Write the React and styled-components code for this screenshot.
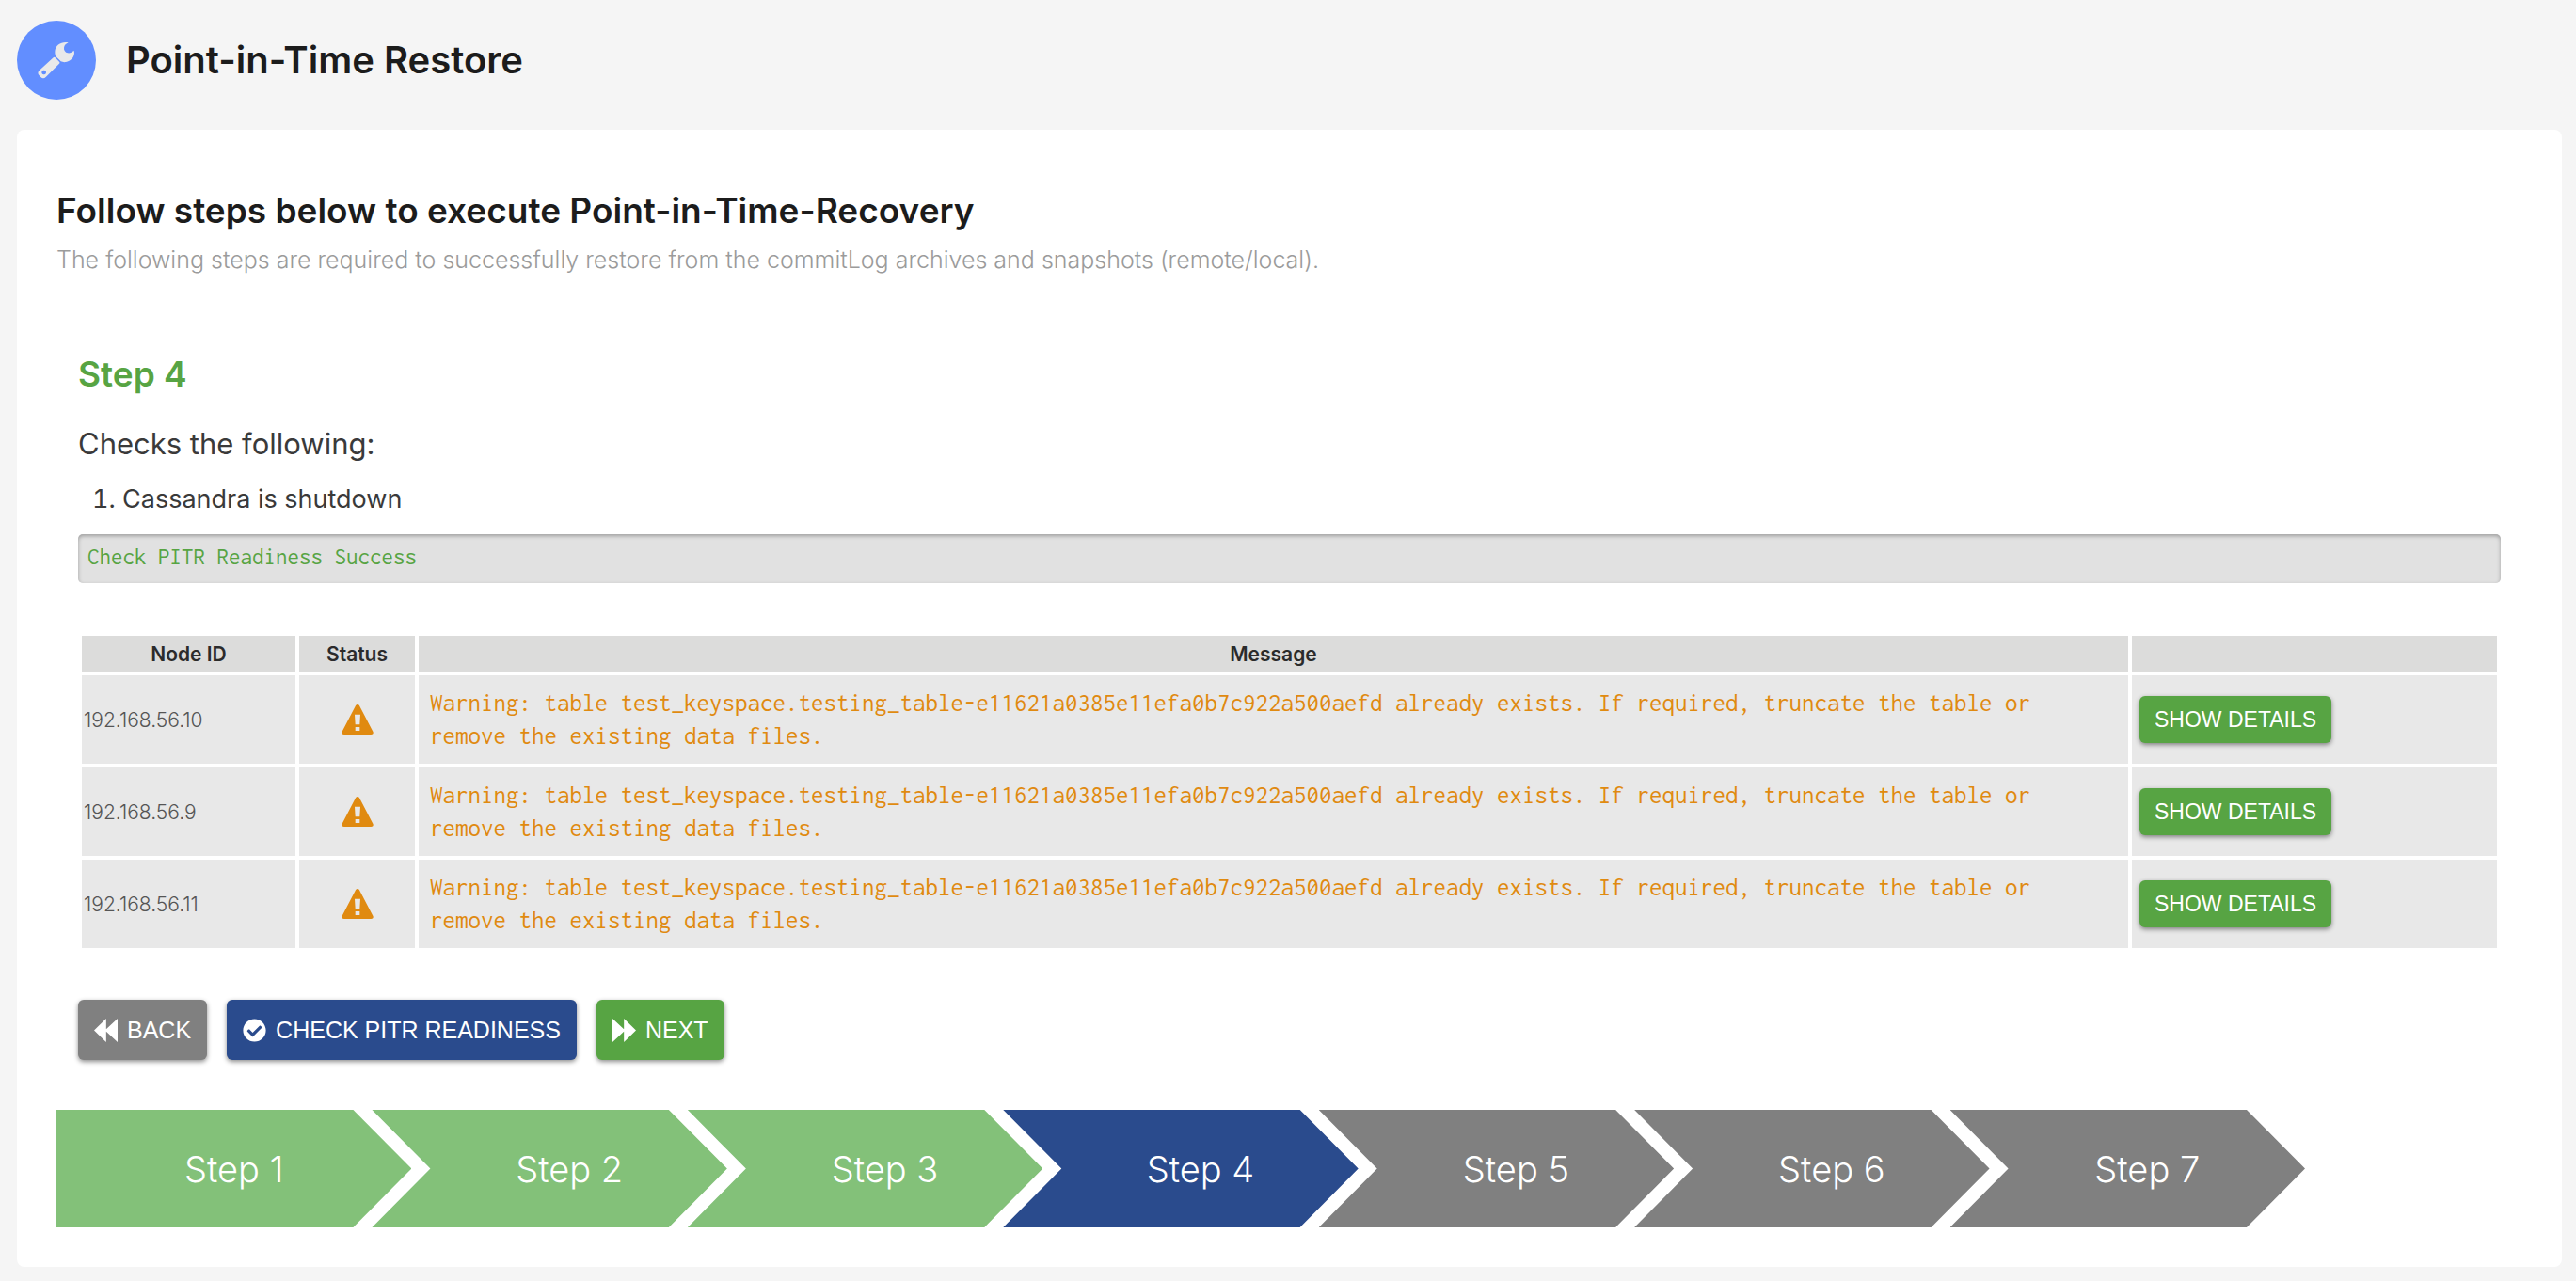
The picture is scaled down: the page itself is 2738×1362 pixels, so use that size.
import React from "react";
import styled, { createGlobalStyle } from "styled-components";
import { FaCheckCircle } from "react-icons/fa";

const sans = `Inter, "Liberation Sans", sans-serif`;
const mono = `Inconsolata, "Noto Sans Mono CJK SC", "Liberation Mono", monospace`;

const colors = {
  page: "#f5f5f5",
  panel: "#ffffff",
  ink: "#1c1c1c",
  text: "#3a3a3a",
  muted: "#9b9b9b",
  green: "#57a443",
  greenDone: "#83c179",
  blue: "#2a4b8d",
  gray: "#808080",
  warning: "#e08a10",
  badge: "#628eff",
};

const GlobalStyle = createGlobalStyle`
  *, *::before, *::after { box-sizing: border-box; }
  body {
    margin: 0;
    background: ${colors.page};
    color: ${colors.text};
    font-family: ${sans};
  }
`;

const Page = styled.div`
  padding: 22px 15px 15px 18px;
`;

const PageHeader = styled.header`
  display: flex;
  align-items: center;
  gap: 32px;
  margin-bottom: 32px;
`;

const Badge = styled.span`
  display: flex;
  align-items: center;
  justify-content: center;
  width: 84px;
  height: 84px;
  border-radius: 50%;
  background: ${colors.badge};
`;

const PageTitle = styled.h1`
  margin: 0;
  color: ${colors.ink};
  font-size: 40px;
  font-weight: 600;
  line-height: 48px;
`;

const Panel = styled.main`
  padding: 62px 42px 42px;
  border-radius: 8px;
  background: ${colors.panel};
`;

const PanelTitle = styled.h2`
  margin: 0 0 10px;
  color: ${colors.ink};
  font-size: 37px;
  font-weight: 600;
  line-height: 48px;
`;

const Lead = styled.p`
  margin: 0 0 80px;
  color: ${colors.muted};
  font-size: 25px;
  font-weight: 300;
  line-height: 36px;
`;

const StepBody = styled.section`
  margin-bottom: 53px;
  padding: 0 23px;
`;

const StepTitle = styled.h3`
  margin: 0 0 30px;
  color: ${colors.green};
  font-size: 37px;
  font-weight: 600;
  line-height: 48px;
`;

const Intro = styled.p`
  margin: 0 0 21px;
  font-size: 31px;
  font-weight: 400;
  line-height: 40px;
`;

const Checks = styled.ol`
  margin: 0 0 19px;
  padding-left: 47px;
  font-size: 27px;
  font-weight: 400;
  line-height: 36px;
`;

const Output = styled.pre`
  margin: 0 0 52px;
  padding: 8px 10px 12px;
  border-radius: 5px;
  background: #e1e1e1;
  box-shadow: inset 0 2px 4px rgba(0, 0, 0, 0.3);
  color: ${colors.green};
  font-family: ${mono};
  font-size: 25px;
  line-height: 32px;
`;

const NodeTable = styled.table`
  width: 100%;
  margin-bottom: 51px;
  border-spacing: 4px;
  table-layout: fixed;
`;

const HeadCell = styled.th`
  width: ${(p) => p.$width || "auto"};
  height: 38px;
  padding: 0;
  background: #dcdcdb;
  color: #2b2b2b;
  font-size: 21px;
  font-weight: 600;
`;

const Cell = styled.td`
  height: 94px;
  padding: 0 16px 0 ${(p) => p.$indent || "0"};
  background: #e8e8e8;
`;

const NodeCell = styled(Cell)`
  color: #555555;
  font-size: 21px;
  font-weight: 300;
`;

const StatusCell = styled(Cell)`
  padding: 0;

  svg {
    display: block;
    margin: 0 auto;
  }
`;

const MessageCell = styled(Cell)`
  color: ${colors.warning};
  font-family: ${mono};
  font-size: 27px;
  line-height: 35px;
`;

const Button = styled.button`
  display: inline-flex;
  align-items: center;
  gap: 10px;
  height: 64px;
  padding: 0 17px;
  border: 0;
  border-radius: 6px;
  background: ${(p) => p.$color};
  box-shadow: 0 2px 5px rgba(0, 0, 0, 0.45);
  color: #ffffff;
  font-family: "Liberation Sans", Arial, sans-serif;
  font-size: 25px;
  text-transform: uppercase;
  white-space: nowrap;
  cursor: pointer;
`;

const SmallButton = styled(Button)`
  display: flex;
  height: 50px;
  padding: 0 16px;
  font-size: 23px;
`;

const Actions = styled.div`
  display: flex;
  gap: 21px;
`;

const Steps = styled.ol`
  display: grid;
  grid-template-columns: repeat(7, 1fr);
  max-width: 2390px;
  margin: 0;
  padding: 0 0 0 42px;
  list-style: none;
`;

const stepColor = {
  done: colors.greenDone,
  current: colors.blue,
  pending: colors.gray,
};

const Step = styled.li`
  display: flex;
  align-items: center;
  justify-content: center;
  height: 125px;
  margin-left: -42px;
  padding-left: 42px;
  background: ${(p) => stepColor[p.$state]};
  clip-path: polygon(
    0 0,
    calc(100% - 62px) 0,
    100% 50%,
    calc(100% - 62px) 100%,
    0 100%,
    62px 50%
  );
  color: #ffffff;
  font-size: 38px;
  font-weight: 300;

  &:first-child {
    padding-left: 0;
    clip-path: polygon(
      0 0,
      calc(100% - 62px) 0,
      100% 50%,
      calc(100% - 62px) 100%,
      0 100%
    );
  }
`;

function WrenchIcon() {
  return (
    <svg width="42" height="42" viewBox="0 0 126 126" aria-hidden="true">
      <path
        fill="#e9e9ea"
        d="M101 7C82 2 59 13 58 36c0 7 1 11 3 15l16 16c5 2 10 3 16 2 15-2 27-15 27-30 0-3-1-5-2-7-5 6-12 9-19 8-8-2-13-9-12-17 1-8 7-13 14-16z"
      />
      <path
        fill="#e9e9ea"
        fillRule="evenodd"
        d="M53 55c2-2 4-2 6 0l13 13c2 2 2 4 0 6l-43 43c-5 5-11 5-16 0l-5-5c-5-5-5-11 0-16zM23 95a7 7 0 1 0 0.1 0z"
      />
    </svg>
  );
}

function WarningIcon() {
  return (
    <svg width="34" height="32" viewBox="0 0 102 96" role="img" aria-label="Warning">
      <path
        fill={colors.warning}
        fillRule="evenodd"
        d="M45 4c3-5 9-5 12 0l43 82c3 5 0 10-6 10H8c-6 0-9-5-6-10zM42 32l2 32h14l2-32zM44 72v12h14V72z"
      />
    </svg>
  );
}

function RewindIcon() {
  return (
    <svg width="25" height="25" viewBox="0 0 76 76" fill="currentColor" aria-hidden="true">
      <path d="M39 0v76L0 38zM76 0v76L35 38z" />
    </svg>
  );
}

function ForwardIcon() {
  return (
    <svg width="25" height="25" viewBox="0 0 76 76" fill="currentColor" aria-hidden="true">
      <path d="M37 0v76l39-38zM0 0v76l41-38z" />
    </svg>
  );
}

const nodes = ["192.168.56.10", "192.168.56.9", "192.168.56.11"];

const warning =
  "Warning: table test_keyspace.testing_table-e11621a0385e11efa0b7c922a500aefd already exists. If required, truncate the table or remove the existing data files.";

const steps = ["done", "done", "done", "current", "pending", "pending", "pending"];

export default function App() {
  return (
    <>
      <GlobalStyle />
      <Page>
        <PageHeader>
          <Badge>
            <WrenchIcon />
          </Badge>
          <PageTitle>Point-in-Time Restore</PageTitle>
        </PageHeader>
        <Panel>
          <PanelTitle>Follow steps below to execute Point-in-Time-Recovery</PanelTitle>
          <Lead>
            The following steps are required to successfully restore from the commitLog archives
            and snapshots (remote/local).
          </Lead>
          <StepBody>
            <StepTitle>Step 4</StepTitle>
            <Intro>Checks the following:</Intro>
            <Checks>
              <li>Cassandra is shutdown</li>
            </Checks>
            <Output>Check PITR Readiness Success</Output>
            <NodeTable>
              <thead>
                <tr>
                  <HeadCell $width="227px">Node ID</HeadCell>
                  <HeadCell $width="123px">Status</HeadCell>
                  <HeadCell>Message</HeadCell>
                  <HeadCell $width="388px" />
                </tr>
              </thead>
              <tbody>
                {nodes.map((node) => (
                  <tr key={node}>
                    <NodeCell $indent="2px">{node}</NodeCell>
                    <StatusCell>
                      <WarningIcon />
                    </StatusCell>
                    <MessageCell $indent="12px">{warning}</MessageCell>
                    <Cell $indent="8px">
                      <SmallButton type="button" $color={colors.green}>
                        Show details
                      </SmallButton>
                    </Cell>
                  </tr>
                ))}
              </tbody>
            </NodeTable>
            <Actions>
              <Button type="button" $color={colors.gray}>
                <RewindIcon />
                Back
              </Button>
              <Button type="button" $color={colors.blue}>
                <FaCheckCircle aria-hidden="true" />
                Check PITR Readiness
              </Button>
              <Button type="button" $color={colors.green}>
                <ForwardIcon />
                Next
              </Button>
            </Actions>
          </StepBody>
          <Steps>
            {steps.map((state, index) => (
              <Step
                key={index}
                $state={state}
                aria-current={state === "current" ? "step" : undefined}
              >
                Step {index + 1}
              </Step>
            ))}
          </Steps>
        </Panel>
      </Page>
    </>
  );
}
